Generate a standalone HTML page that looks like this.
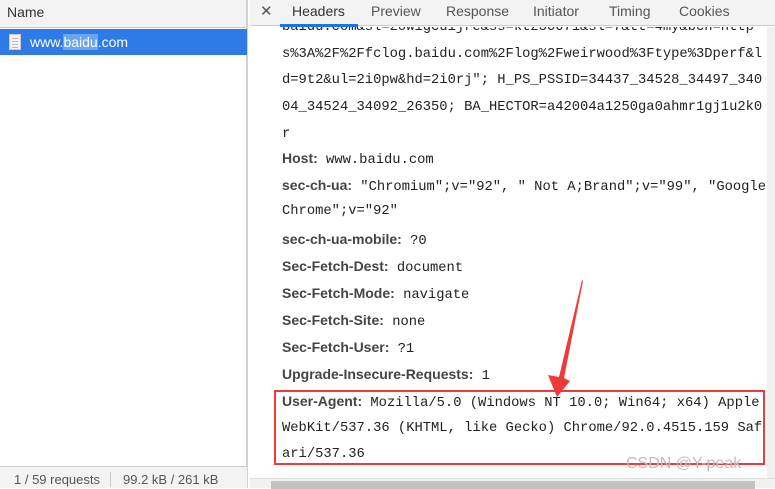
<!DOCTYPE html>
<html><head><meta charset="utf-8"><style>
*{margin:0;padding:0;box-sizing:border-box}
body{width:775px;height:488px;overflow:hidden;background:#fff;position:relative;font-family:"Liberation Sans",sans-serif}
.left{position:absolute;left:0;top:0;width:248px;height:488px;background:#fff;border-right:2px solid #cfd1d4}
.lh{height:28px;background:#f3f3f3;border-bottom:1px solid #ccc;font-size:14px;color:#333;padding:4px 7px}
.row{position:absolute;top:29px;left:0;width:247px;height:26px;background:#2e7ae6;color:#fff;font-size:14px;line-height:26px;padding-left:30px}
.row .sel{background:#6aa6ee}
.doc{position:absolute;left:9px;top:5px;width:12px;height:16px;background:#f3f3f3;border:1px solid #ccc}
.doc i{position:absolute;left:2px;right:2px;height:1px;background:#bbb}
.stat{position:absolute;left:0;top:466px;width:247px;height:22px;background:#f3f3f3;border-top:1px solid #ccc;font-size:13px;color:#555;padding:5px 14px;white-space:nowrap}
.stat span{border-left:1px solid #ccc;margin-left:10px;padding-left:12px}
.tabs{position:absolute;left:250px;top:0;width:525px;height:26px;background:#f3f3f3;border-bottom:1px solid #ccc;font-size:14px;color:#555;white-space:nowrap}
.tabs span{position:absolute;top:3px}
.ul{position:absolute;left:280px;top:24px;width:78px;height:3px;background:#1a73e8}
.content{position:absolute;left:250px;top:27px;width:517px;height:451px;overflow:hidden}
.ln{position:absolute;left:32px;white-space:nowrap;font-family:"Liberation Mono",monospace;font-size:13.8px;color:#222;height:27px;line-height:27px}
.ln b{font-family:"Liberation Sans",sans-serif;font-size:14px;color:#444;font-weight:bold}
.vs{position:absolute;left:767px;top:27px;width:8px;height:451px;background:#f1f1f1}
.hs{position:absolute;left:250px;top:478px;width:525px;height:10px;background:#f1f1f1;border-top:1px solid #ddd}
.hs i{position:absolute;left:21px;top:2px;width:484px;height:8px;background:#c1c1c1}
.box{position:absolute;left:274px;top:390px;width:491px;height:75px;border:2px solid #f03a3a}
.wm{position:absolute;left:626px;top:455px;font-size:16px;color:#bdbdbd;font-family:"Liberation Sans",sans-serif}
</style></head><body>
<div class="left">
<div class="lh">Name</div>
<div class="row"><div class="doc"><i style="top:3px"></i><i style="top:6px"></i><i style="top:9px"></i><i style="top:12px"></i></div>www.<span class="sel">baidu</span>.com</div>
<div class="stat">1 / 59 requests<span>99.2 kB / 261 kB</span></div>
</div>
<div class="tabs">
<span style="left:10px;font-size:15px;top:2px">✕</span>
<span style="left:42px;color:#333">Headers</span>
<span style="left:121px">Preview</span>
<span style="left:196px">Response</span>
<span style="left:283px">Initiator</span>
<span style="left:359px">Timing</span>
<span style="left:429px">Cookies</span>
</div>
<div class="ul"></div>
<div class="content">
<div class="ln" style="top:-13px">baidu.com&amp;sl=zowigcuijre&amp;ss=ktz30071&amp;sl=7&amp;tt=4my&amp;bcn=http</div>
<div class="ln" style="top:14px">s%3A%2F%2Ffclog.baidu.com%2Flog%2Fweirwood%3Ftype%3Dperf&amp;l</div>
<div class="ln" style="top:40px">d=9t2&amp;ul=2i0pw&amp;hd=2i0rj"; H_PS_PSSID=34437_34528_34497_340</div>
<div class="ln" style="top:67px">04_34524_34092_26350; BA_HECTOR=a42004a1250ga0ahmr1gj1u2k0</div>
<div class="ln" style="top:94px">r</div>
<div class="ln" style="top:118px"><b>Host:</b> www.baidu.com</div>
<div class="ln" style="top:145px"><b>sec-ch-ua:</b> "Chromium";v="92", " Not A;Brand";v="99", "Google</div>
<div class="ln" style="top:171px">Chrome";v="92"</div>
<div class="ln" style="top:199px"><b>sec-ch-ua-mobile:</b> ?0</div>
<div class="ln" style="top:226px"><b>Sec-Fetch-Dest:</b> document</div>
<div class="ln" style="top:253px"><b>Sec-Fetch-Mode:</b> navigate</div>
<div class="ln" style="top:280px"><b>Sec-Fetch-Site:</b> none</div>
<div class="ln" style="top:307px"><b>Sec-Fetch-User:</b> ?1</div>
<div class="ln" style="top:334px"><b>Upgrade-Insecure-Requests:</b> 1</div>
<div class="ln" style="top:361px"><b>User-Agent:</b> Mozilla/5.0 (Windows NT 10.0; Win64; x64) Apple</div>
<div class="ln" style="top:388px">WebKit/537.36 (KHTML, like Gecko) Chrome/92.0.4515.159 Saf</div>
<div class="ln" style="top:414px">ari/537.36</div>
</div>
<div class="vs"></div>
<div class="hs"><i></i></div>
<div class="box"></div>
<svg style="position:absolute;left:0;top:0" width="775" height="488"><polygon points="582,280 583,281 564,378 570,381 557,397 548,375 559,377" fill="#f03a3a"/></svg>
<div class="wm">CSDN @Y-peak</div>
</body></html>
